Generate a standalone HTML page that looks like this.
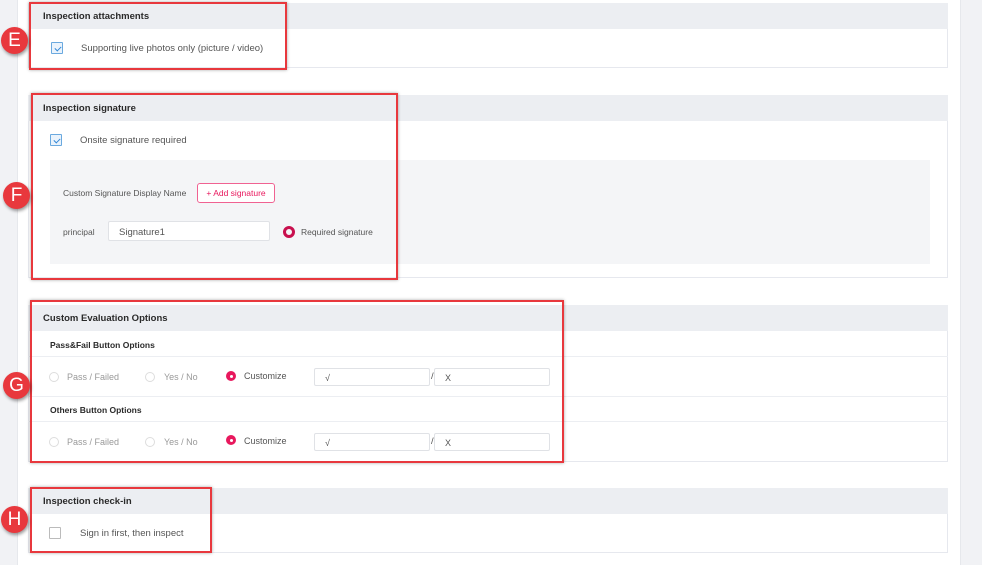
<!DOCTYPE html>
<html><head><meta charset="utf-8"><style>
*{box-sizing:border-box;margin:0;padding:0}
body{width:982px;height:565px;position:relative;background:#fff;font-family:"Liberation Sans",sans-serif;overflow:hidden;color:#333}
.a{position:absolute}
.panel{position:absolute;left:28px;width:920px;background:#fff;border:1px solid #e6e8ee;border-top:none}
.hd{position:absolute;left:28px;width:920px;height:26px;background:#eceef2;font-size:9.5px;font-weight:bold;color:#2a2a2a;padding:8px 0 0 15px}
.red{position:absolute;border:2px solid #e8383d;box-shadow:0 0 3px rgba(0,0,0,.35)}
.circ{position:absolute;width:27px;height:27px;border-radius:50%;background:#e8383d;color:#fff;font-size:19px;text-align:center;line-height:27px;box-shadow:1px 2px 3px rgba(0,0,0,.4)}
.t{position:absolute;font-size:9.5px;color:#555;white-space:nowrap}
.cb{position:absolute;width:12px;height:12px;border:1px solid #6aa9df;background:#eaf3fc;border-radius:1px}
.cb:after{content:"";position:absolute;left:3.5px;top:1.5px;width:3px;height:5px;border:solid #2f86d6;border-width:0 1.5px 1.5px 0;transform:rotate(45deg)}
.rd{position:absolute;width:10px;height:10px;border-radius:50%;border:1px solid #ddd}
.rs{position:absolute;width:10px;height:10px;border-radius:50%;background:#e8185d}
.rs:after{content:"";position:absolute;left:3.5px;top:3.5px;width:3px;height:3px;background:#fff;border-radius:50%}
.inp{position:absolute;height:18px;border:1px solid #e0e2e6;border-radius:2px;font-size:9px;color:#555;padding:4px 0 0 10px}
.line{position:absolute;left:28px;width:920px;height:1px;background:#eceef2}
.g{color:#999}
</style></head><body>
<div class="a" style="left:0;top:0;width:18px;height:565px;background:#f1f2f5;border-right:1px solid #e6e8ec"></div>
<div class="a" style="left:960px;top:0;width:22px;height:565px;background:#f1f2f5;border-left:1px solid #e6e8ec"></div>

<!-- E -->
<div class="panel" style="top:3px;height:65px"></div>
<div class="hd" style="top:3px">Inspection attachments</div>
<div class="cb" style="left:51px;top:42px"></div>
<div class="t" style="left:81px;top:43px">Supporting live photos only (picture / video)</div>
<div class="red" style="left:29px;top:2px;width:258px;height:68px"></div>
<div class="circ" style="left:1px;top:27px">E</div>

<!-- F -->
<div class="panel" style="top:95px;height:183px"></div>
<div class="hd" style="top:95px">Inspection signature</div>
<div class="cb" style="left:50px;top:134px"></div>
<div class="t" style="left:80px;top:135px">Onsite signature required</div>
<div class="a" style="left:50px;top:160px;width:880px;height:104px;background:#f4f5f7"></div>
<div class="t" style="left:63px;top:188px;font-size:8.5px">Custom Signature Display Name</div>
<div class="a" style="left:197px;top:183px;width:78px;height:20px;border:1px solid #f06292;border-radius:3px;background:#fff;color:#e8185d;font-size:8.5px;text-align:center;line-height:18px">+ Add signature</div>
<div class="t" style="left:63px;top:227px;font-size:8.5px">principal</div>
<div class="inp" style="left:108px;top:221px;width:162px;height:20px;background:#fff;padding-top:5px;font-size:9.5px">Signature1</div>
<div class="a" style="left:283px;top:226px;width:12px;height:12px;border-radius:50%;border:3px solid #c8104e"></div>
<div class="t" style="left:301px;top:227px;font-size:8.5px">Required signature</div>
<div class="red" style="left:31px;top:93px;width:367px;height:187px"></div>
<div class="circ" style="left:3px;top:182px">F</div>

<!-- G -->
<div class="panel" style="top:305px;height:157px"></div>
<div class="hd" style="top:305px">Custom Evaluation Options</div>
<div class="t" style="left:50px;top:340px;font-weight:bold;color:#2a2a2a;font-size:8.5px">Pass&amp;Fail Button Options</div>
<div class="line" style="top:356px"></div>
<div class="rd" style="left:49px;top:372px"></div><div class="t g" style="left:67px;top:372px;font-size:9px">Pass / Failed</div>
<div class="rd" style="left:145px;top:372px"></div><div class="t g" style="left:164px;top:372px;font-size:9px">Yes / No</div>
<div class="rs" style="left:226px;top:371px"></div><div class="t" style="left:244px;top:371px;font-size:9px">Customize</div>
<div class="inp" style="left:314px;top:368px;width:116px">√</div>
<div class="t" style="left:431px;top:371px">/</div>
<div class="inp" style="left:434px;top:368px;width:116px">X</div>
<div class="line" style="top:396px"></div>
<div class="t" style="left:50px;top:405px;font-weight:bold;color:#2a2a2a;font-size:8.5px">Others Button Options</div>
<div class="line" style="top:421px"></div>
<div class="rd" style="left:49px;top:437px"></div><div class="t g" style="left:67px;top:437px;font-size:9px">Pass / Failed</div>
<div class="rd" style="left:145px;top:437px"></div><div class="t g" style="left:164px;top:437px;font-size:9px">Yes / No</div>
<div class="rs" style="left:226px;top:435px"></div><div class="t" style="left:244px;top:436px;font-size:9px">Customize</div>
<div class="inp" style="left:314px;top:433px;width:116px">√</div>
<div class="t" style="left:431px;top:436px">/</div>
<div class="inp" style="left:434px;top:433px;width:116px">X</div>
<div class="red" style="left:30px;top:300px;width:534px;height:163px"></div>
<div class="circ" style="left:3px;top:372px">G</div>

<!-- H -->
<div class="panel" style="top:488px;height:65px"></div>
<div class="hd" style="top:488px">Inspection check-in</div>
<div class="a" style="left:49px;top:527px;width:12px;height:12px;border:1px solid #bbb;border-radius:1px"></div>
<div class="t" style="left:80px;top:528px">Sign in first, then inspect</div>
<div class="red" style="left:30px;top:487px;width:182px;height:66px"></div>
<div class="circ" style="left:1px;top:506px">H</div>
</body></html>
